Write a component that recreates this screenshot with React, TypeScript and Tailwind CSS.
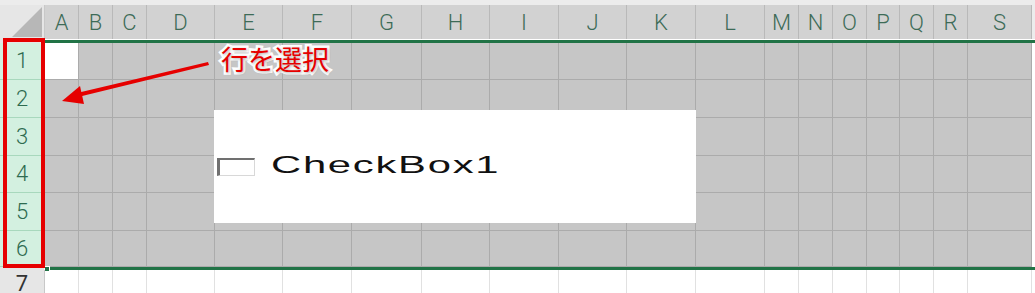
import React from "react";

const cols = [
  { k: "A", w: 34 },
  { k: "B", w: 34 },
  { k: "C", w: 34 },
  { k: "D", w: 68 },
  { k: "E", w: 68 },
  { k: "F", w: 69 },
  { k: "G", w: 70 },
  { k: "H", w: 68 },
  { k: "I", w: 69 },
  { k: "J", w: 68 },
  { k: "K", w: 69 },
  { k: "L", w: 69 },
  { k: "M", w: 34 },
  { k: "N", w: 34 },
  { k: "O", w: 34 },
  { k: "P", w: 33 },
  { k: "Q", w: 34 },
  { k: "R", w: 34 },
  { k: "S", w: 64 },
];

const rows = [
  { n: 1, h: 37 },
  { n: 2, h: 38 },
  { n: 3, h: 38 },
  { n: 4, h: 37 },
  { n: 5, h: 38 },
  { n: 6, h: 36 },
];

const font = { fontFamily: "Roboto, 'Liberation Sans', sans-serif" };

export default function App() {
  return (
    <div className="relative w-[1035px] h-[293px] overflow-hidden bg-white" style={font}>
      {/* top strip */}
      <div className="h-[5px] bg-[#ececec]" />

      {/* column headers */}
      <div className="flex h-[34px]">
        <div className="relative w-[45px] shrink-0 bg-[#e6e6e6] border-r border-[#c8c8c8] overflow-hidden">
          <svg className="absolute right-[2px] bottom-[2px]" width="30" height="30" viewBox="0 0 30 30">
            <polygon points="30,0 30,30 0,30" fill="#b7b7b7" />
          </svg>
        </div>
        {cols.map((c) => (
          <div
            key={c.k}
            style={{ width: c.w }}
            className="shrink-0 bg-[#d2d2d2] border-r border-[#b9b9b9] flex items-center justify-center text-[22px] font-light text-[#3d6b57] leading-none pt-[1px]"
          >
            {c.k}
          </div>
        ))}
        <div className="flex-1 bg-[#ececec]" />
      </div>

      {/* selection top edge */}
      <div className="flex h-[4px]">
        <div className="w-[45px] shrink-0 bg-[#e6e6e6]" />
        <div className="flex-1 flex flex-col">
          <div className="h-[1px] bg-white" />
          <div className="h-[3px] bg-[#217346]" />
        </div>
      </div>

      {/* selected rows */}
      {rows.map((r) => (
        <div key={r.n} className="flex" style={{ height: r.h }}>
          <div className="w-[45px] shrink-0 bg-[#d3f0e0] border-b border-r border-[#a8d8bd] flex items-center justify-center text-[22px] font-light text-[#2e6b50] leading-none">
            {r.n}
          </div>
          {cols.map((c, i) => (
            <div
              key={c.k}
              style={{ width: c.w }}
              className={
                "shrink-0 border-r border-b border-[#ababab] " +
                (r.n === 1 && i === 0 ? "bg-white" : "bg-[#c6c6c6]")
              }
            />
          ))}
          <div className="flex-1 bg-white" />
        </div>
      ))}

      {/* selection bottom edge */}
      <div className="flex h-[3px] items-center">
        <div className="w-[45px] shrink-0 bg-[#e6e6e6] self-stretch" />
        <div className="w-[6px] h-[6px] shrink-0 bg-[#217346] border border-white -ml-[1px]" />
        <div className="flex-1 h-[3px] bg-[#217346]" />
      </div>

      {/* row 7 */}
      <div className="flex h-[23px]">
        <div className="w-[45px] shrink-0 bg-[#e6e6e6] border-r border-[#c8c8c8] flex items-start justify-center text-[22px] text-[#333] leading-none pt-[3px]">
          7
        </div>
        {cols.map((c) => (
          <div key={c.k} style={{ width: c.w }} className="shrink-0 border-r border-[#e1e1e1]" />
        ))}
        <div className="flex-1" />
      </div>

      {/* checkbox control */}
      <div className="absolute left-[214px] top-[110px] w-[482px] h-[113px] bg-white">
        <div className="absolute left-[3px] top-[48px] w-[38px] h-[18px] bg-white border-l-[3px] border-t-2 border-r border-b border-l-[#707070] border-t-[#707070] border-r-[#d8d8d8] border-b-[#d8d8d8]" />
        <div
          className="absolute left-[57px] top-[43px] text-[24px] leading-none text-[#111] origin-left scale-x-[1.74] tracking-[1px] whitespace-nowrap"
          style={{ fontFamily: "'Liberation Sans', Arial, sans-serif" }}
        >
          CheckBox1
        </div>
      </div>

      {/* red highlight box */}
      <div className="absolute left-[3px] top-[38px] w-[42px] h-[230px] border-4 border-[#e60000]" />

      {/* arrow */}
      <svg className="absolute left-0 top-0" width="260" height="120" viewBox="0 0 260 120">
        <polygon points="208,62 209,65 78,97 77,93" fill="#e60000" />
        <polygon points="62,101 80,86 84,104" fill="#e60000" />
      </svg>

      {/* label */}
      <div
        className="absolute left-[221px] top-[45px] text-[27px] leading-none text-[#e60000] whitespace-nowrap [paint-order:stroke_fill] [-webkit-text-stroke:5px_white] [text-shadow:1px_1px_3px_rgba(0,0,0,0.35)]"
        style={{ fontFamily: "'Noto Sans CJK JP', sans-serif" }}
      >
        行を選択
      </div>
    </div>
  );
}
